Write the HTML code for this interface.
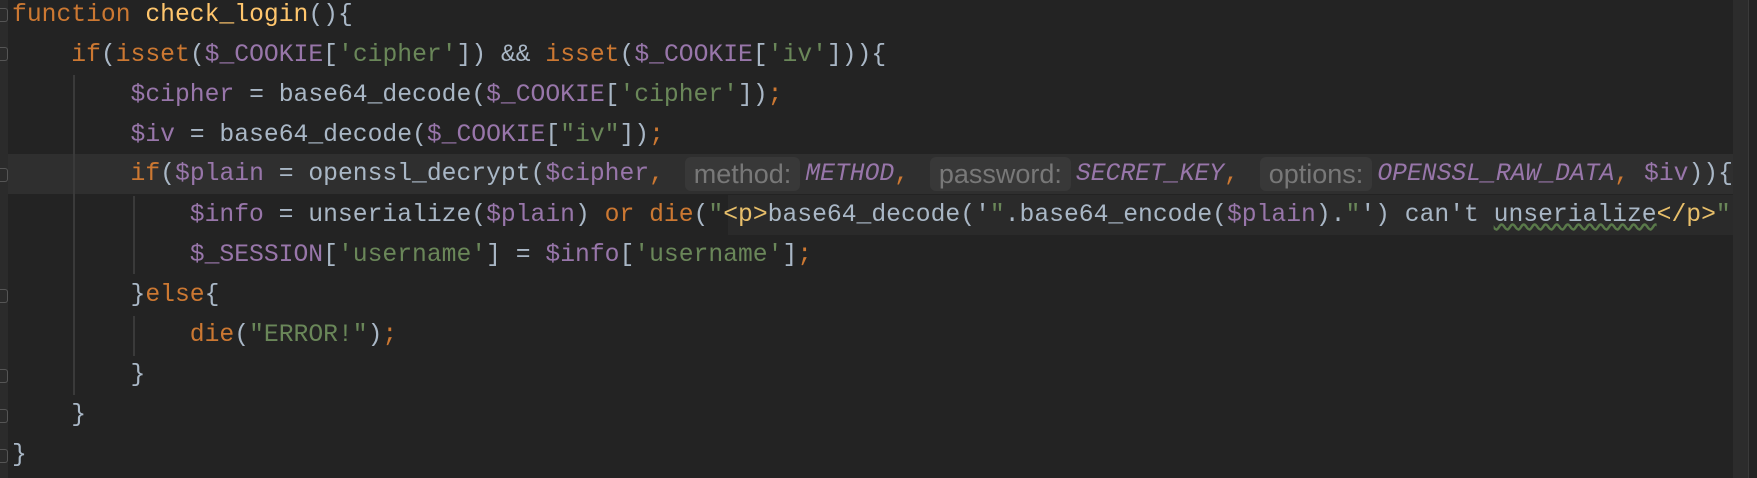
<!DOCTYPE html>
<html><head><meta charset="utf-8"><style>
html,body{margin:0;padding:0;}
body{width:1757px;height:478px;background:#232323;position:relative;overflow:hidden;font-family:"Liberation Mono",monospace;font-size:24.7px;}
.gut{position:absolute;left:0;top:0;width:8px;height:478px;background:#2b2b2b;}
.ln{position:absolute;left:12px;height:40px;line-height:40px;white-space:pre;color:#a9b7c6;}
.hl{position:absolute;left:8px;top:154px;width:1725px;height:40px;background:#2f2f2f;}
.k{color:#cc7832}.f{color:#ffc66d}.v{color:#9876aa}.s{color:#6a8759}.c{color:#9876aa;font-style:italic}.t{color:#e8bf6a}
.h{display:inline-block;font-family:"Liberation Sans",sans-serif;font-size:27px;color:#787878;background:#383838;border-radius:6px;height:34px;line-height:34px;padding:0 9px;vertical-align:top;margin-top:3px;margin-left:6px;margin-right:5px;}
.g{position:absolute;width:2px;background:#3a3a3a;}
.sb{position:absolute;left:1733px;top:0;width:15px;height:478px;background:#2c2c2c;}
.sb2{position:absolute;left:1748px;top:0;width:1px;height:478px;background:#3a3a3a;}
.inj{position:absolute;left:728px;top:195px;width:1005px;height:40px;background:#2a2a2a;}
.icon{position:absolute;left:0;width:7px;height:12px;border:1.5px solid #555;border-left:none;border-radius:0 3px 3px 0;}
</style></head><body>
<div class="gut"></div>
<div class="hl"></div>
<div class="inj"></div>
<div class="sb"></div><div class="sb2"></div>
<div class="g" style="left:73px;top:75px;height:320px"></div>
<div class="g" style="left:133px;top:196px;height:78px"></div>
<div class="g" style="left:133px;top:316px;height:40px"></div>
<div class="icon" style="top:8px"></div>
<div class="icon" style="top:47px"></div>
<div class="icon" style="top:168px"></div>
<div class="icon" style="top:289px"></div>
<div class="icon" style="top:369px"></div>
<div class="icon" style="top:409px"></div>
<div class="icon" style="top:449px"></div>

<div class="ln" style="top:-5px"><span class="k">function</span> <span class="f">check_login</span>(){</div>
<div class="ln" style="top:35px">    <span class="k">if</span>(<span class="k">isset</span>(<span class="v">$_COOKIE</span>[<span class="s">'cipher'</span>]) &amp;&amp; <span class="k">isset</span>(<span class="v">$_COOKIE</span>[<span class="s">'iv'</span>])){</div>
<div class="ln" style="top:75px">        <span class="v">$cipher</span> = base64_decode(<span class="v">$_COOKIE</span>[<span class="s">'cipher'</span>])<span class="k">;</span></div>
<div class="ln" style="top:115px">        <span class="v">$iv</span> = base64_decode(<span class="v">$_COOKIE</span>[<span class="s">"iv"</span>])<span class="k">;</span></div>
<div class="ln" style="top:154px">        <span class="k">if</span>(<span class="v">$plain</span> = openssl_decrypt(<span class="v">$cipher</span><span class="k">,</span> <span class="h">method:</span><span class="c">METHOD</span><span class="k">,</span> <span class="h">password:</span><span class="c">SECRET_KEY</span><span class="k">,</span> <span class="h">options:</span><span class="c">OPENSSL_RAW_DATA</span><span class="k">,</span> <span class="v">$iv</span>)){</div>
<div class="ln" style="top:195px">            <span class="v">$info</span> = unserialize(<span class="v">$plain</span>) <span class="k">or</span> <span class="k">die</span>(<span class="s">"</span><span class="t">&lt;p&gt;</span>base64_decode('<span class="s">"</span>.base64_encode(<span class="v">$plain</span>).<span class="s">"</span>') can't <span style="text-decoration:underline wavy #5a7a4a">unserialize</span><span class="t">&lt;/p&gt;</span><span class="s">"</span></div>
<div class="ln" style="top:235px">            <span class="v">$_SESSION</span>[<span class="s">'username'</span>] = <span class="v">$info</span>[<span class="s">'username'</span>]<span class="k">;</span></div>
<div class="ln" style="top:275px">        }<span class="k">else</span>{</div>
<div class="ln" style="top:315px">            <span class="k">die</span>(<span class="s">"ERROR!"</span>)<span class="k">;</span></div>
<div class="ln" style="top:355px">        }</div>
<div class="ln" style="top:395px">    }</div>
<div class="ln" style="top:435px">}</div>
</body></html>
